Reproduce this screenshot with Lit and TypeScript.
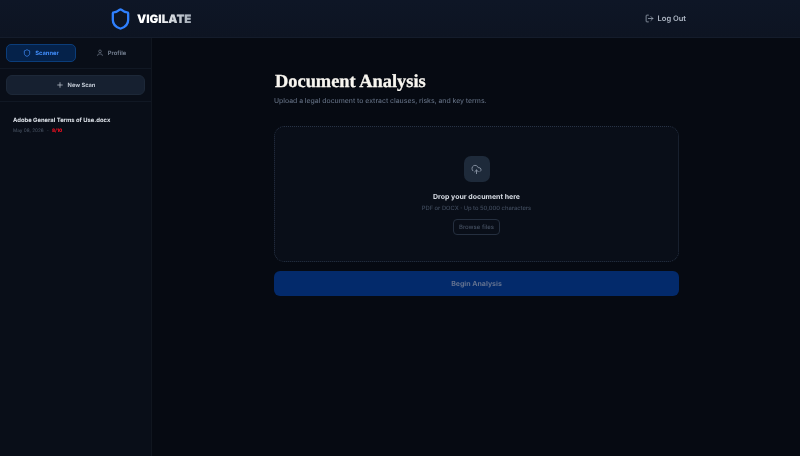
import { LitElement, html, css } from "lit";
import { customElement } from "lit/decorators.js";

const shield = "M20 13c0 5-3.5 7.5-7.66 8.95a1 1 0 0 1-.67-.01C7.5 20.5 4 18 4 13V6a1 1 0 0 1 1-1c2 0 4.5-1.2 6.24-2.72a1.17 1.17 0 0 1 1.52 0C14.51 3.81 17 5 19 5a1 1 0 0 1 1 1z";

@customElement("app-root")
export class AppRoot extends LitElement {
  static styles = css`
    :host { display: block; width: 800px; height: 456px; overflow: hidden; background: #060a12; font-family: Inter, "Liberation Sans", sans-serif; color: #e2e8f0; text-rendering: geometricPrecision; filter: blur(0.3px); }
    .header { height: 38px; box-sizing: border-box; border-bottom: 1px solid #141c2b; background: linear-gradient(180deg, #0e1626, #0d1422); display: flex; align-items: center; justify-content: space-between; padding: 0 114px 0 109px; }
    .brand { display: flex; align-items: center; gap: 5px; }
    .brand span { font-size: 11.6px; font-weight: 900; background: linear-gradient(90deg, #ffffff 35%, #a4adb8 100%); -webkit-background-clip: text; background-clip: text; color: transparent; filter: drop-shadow(0.4px 0 0 #6b7280); }
    .logout { display: flex; align-items: center; gap: 4px; font-size: 7.5px; font-weight: 600; color: #b0b9c6; }
    .body { display: flex; height: 418px; }
    .side { width: 152px; box-sizing: border-box; border-right: 1px solid #10161f; background: #090e18; flex: none; }
    .tabs { display: flex; gap: 1px; padding: 6px; border-bottom: 1px solid #111824; }
    .tab { flex: 1; height: 18px; box-sizing: border-box; border-radius: 5px; display: flex; align-items: center; justify-content: center; gap: 4px; font-size: 5.8px; font-weight: 700; color: #6f7a8b; }
    .tab.on { background: #05224a; border: 1px solid #0b3d7a; color: #408cf8; }
    .new { padding: 6px; border-bottom: 1px solid #111824; }
    .new div { height: 20px; border-radius: 6px; background: #162030; border: 1px solid #1d2838; box-sizing: border-box; display: flex; align-items: center; justify-content: center; gap: 4px; font-size: 5.7px; font-weight: 700; color: #c0c8d3; }
    .item { padding: 14px 13px; }
    .item h4 { margin: 0; font-size: 5.85px; line-height: 9px; font-weight: 700; color: #dde2e9; }
    .meta { display: flex; gap: 3.4px; margin-top: 3px; font-size: 4.7px; line-height: 7px; color: #4d5868; }
    .meta b { color: #f01020; font-weight: 800; }
    .main { flex: 1; display: flex; justify-content: center; padding-left: 1px; }
    .col { width: 405px; padding-top: 33px; }
    h1 { margin: 0; font-family: "Liberation Serif", serif; font-size: 18.4px; line-height: 21px; font-weight: 700; color: #f8f6f0; -webkit-text-stroke: 0.3px #f8f6f0; padding-left: 1px; }
    .sub { margin: 4px 0 0; font-size: 6.85px; line-height: 10px; font-weight: 500; color: #5f6b7e; }
    .drop { margin-top: 20px; height: 136px; box-sizing: border-box; border: 1px dotted #283345; border-radius: 10px; background: #090e18; display: flex; flex-direction: column; align-items: center; padding-top: 29px; }
    .ic { width: 26px; height: 26px; border-radius: 7px; background: #1e2a3a; display: flex; align-items: center; justify-content: center; }
    .t { margin-top: 10px; font-size: 7px; line-height: 10px; font-weight: 700; color: #d8dde5; }
    .s { margin-top: 2px; font-size: 5.8px; line-height: 9px; font-weight: 500; color: #414c5e; }
    .b { margin-top: 6px; height: 16px; box-sizing: border-box; padding: 0 5px; border: 1px solid #252f3f; border-radius: 4px; font-size: 6px; font-weight: 500; display: flex; align-items: center; color: #465162; }
    .go { margin-top: 9px; height: 25px; border-radius: 6px; background: #032a6b; display: flex; align-items: center; justify-content: center; font-size: 7px; font-weight: 700; color: #62718f; }
  `;
  render() {
    return html`
      <div class="header">
        <div class="brand">
          <svg width="23" height="24" viewBox="0 0 24 24" fill="none" stroke="#2f80ff" stroke-width="2.4" stroke-linecap="round" stroke-linejoin="round"><path d=${shield} /></svg>
          <span>VIGILATE</span>
        </div>
        <div class="logout">
          <svg width="9" height="9" viewBox="0 0 24 24" fill="none" stroke="#a3adbb" stroke-width="2" stroke-linecap="round" stroke-linejoin="round"><path d="M9 21H5a2 2 0 0 1-2-2V5a2 2 0 0 1 2-2h4"/><polyline points="16 17 21 12 16 7"/><line x1="21" y1="12" x2="9" y2="12"/></svg>
          Log Out
        </div>
      </div>
      <div class="body">
        <aside class="side">
          <div class="tabs">
            <div class="tab on">
              <svg width="8" height="8" viewBox="0 0 24 24" fill="none" stroke="#408cf8" stroke-width="2.2"><path d=${shield} /></svg>
              Scanner
            </div>
            <div class="tab">
              <svg width="8" height="8" viewBox="0 0 24 24" fill="none" stroke="#6f7a8b" stroke-width="2"><path d="M19 21v-2a4 4 0 0 0-4-4H9a4 4 0 0 0-4 4v2"/><circle cx="12" cy="7" r="4"/></svg>
              Profile
            </div>
          </div>
          <div class="new"><div>
            <svg width="8" height="8" viewBox="0 0 24 24" fill="none" stroke="#c0c8d3" stroke-width="2.2" stroke-linecap="round"><path d="M5 12h14M12 5v14"/></svg>
            New Scan
          </div></div>
          <div class="item">
            <h4>Adobe General Terms of Use.docx</h4>
            <div class="meta"><span>May 08, 2026</span><span>·</span><b>8/10</b></div>
          </div>
        </aside>
        <main class="main">
          <div class="col">
            <h1>Document Analysis</h1>
            <p class="sub">Upload a legal document to extract clauses, risks, and key terms.</p>
            <div class="drop">
              <div class="ic"><svg width="11" height="11" viewBox="0 0 24 24" fill="none" stroke="#8b96a6" stroke-width="2" stroke-linecap="round" stroke-linejoin="round"><path d="M12 13v8"/><path d="M4 14.9A7 7 0 1 1 15.7 8h1.8a4.5 4.5 0 0 1 2.5 8.2"/><path d="m8 17 4-4 4 4"/></svg></div>
              <div class="t">Drop your document here</div>
              <div class="s">PDF or DOCX · Up to 50,000 characters</div>
              <div class="b">Browse files</div>
            </div>
            <div class="go">Begin Analysis</div>
          </div>
        </main>
      </div>
    `;
  }
}
